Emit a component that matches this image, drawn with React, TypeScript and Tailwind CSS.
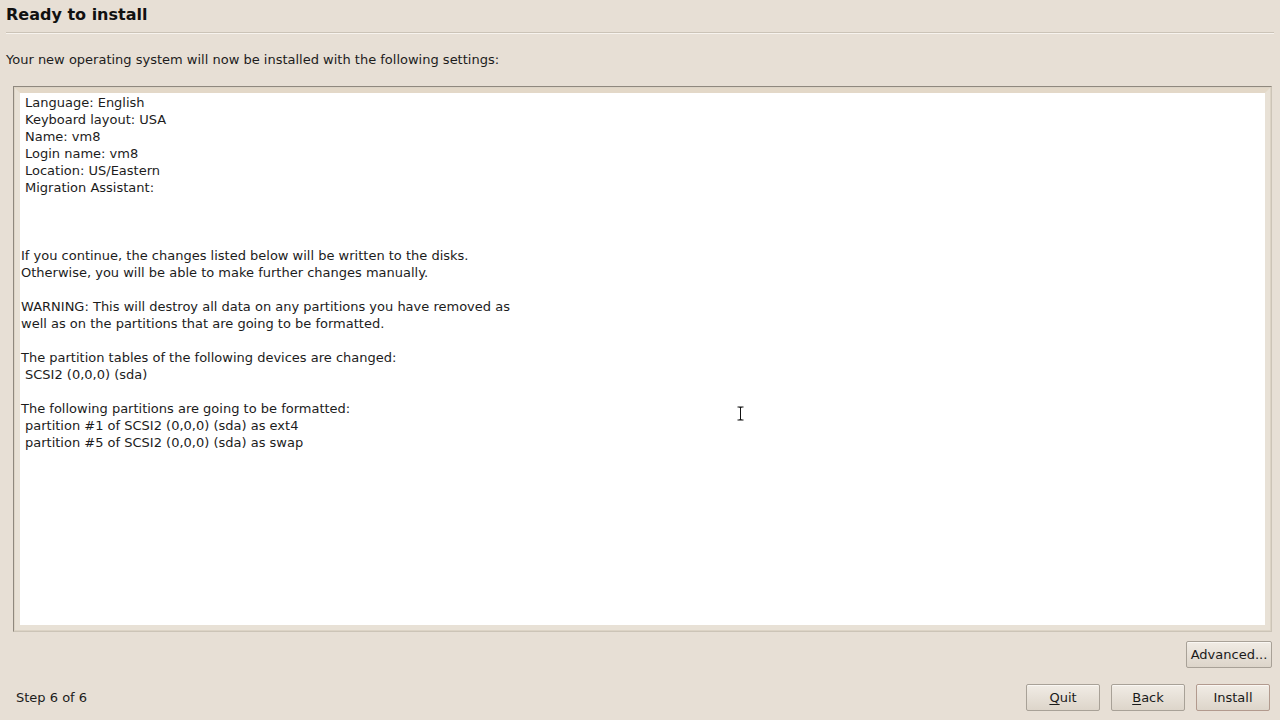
import * as React from 'react'

const summaryLines = [
  'Language: English',
  'Keyboard layout: USA',
  'Name: vm8',
  'Login name: vm8',
  'Location: US/Eastern',
  'Migration Assistant:',
]

const detailLines: (string | { text: string; indent: boolean })[] = [
  'If you continue, the changes listed below will be written to the disks.',
  'Otherwise, you will be able to make further changes manually.',
  '',
  'WARNING: This will destroy all data on any partitions you have removed as',
  'well as on the partitions that are going to be formatted.',
  '',
  'The partition tables of the following devices are changed:',
  { text: 'SCSI2 (0,0,0) (sda)', indent: true },
  '',
  'The following partitions are going to be formatted:',
  { text: 'partition #1 of SCSI2 (0,0,0) (sda) as ext4', indent: true },
  { text: 'partition #5 of SCSI2 (0,0,0) (sda) as swap', indent: true },
]

function GtkButton({ children, className = '' }: { children: React.ReactNode; className?: string }) {
  return (
    <button
      className={`flex h-[27px] items-center justify-center rounded-[2px] border border-[#a8a197] bg-gradient-to-b from-[#f1ece5] to-[#ddd5ca] text-[13px] text-[#1a1a1a] shadow-[inset_0_1px_0_#faf7f3] ${className}`}
    >
      {children}
    </button>
  )
}

// I-beam text cursor
function IBeam() {
  return (
    <svg width="9" height="17" viewBox="0 0 9 17">
      <path d="M1 1h7v2H5.5v11H8v2H1v-2h2.5V3H1z" fill="#111" stroke="#fff" strokeWidth="1" />
    </svg>
  )
}

export default function App() {
  return (
    <div
      className="flex h-[720px] w-[1280px] flex-col bg-[#e7dfd5] text-[#1c1c1c]"
      style={{ fontFamily: '"DejaVu Sans", Verdana, sans-serif' }}
    >
      {/* Header */}
      <div className="px-[6px] pt-[5px]">
        <h1 className="text-[16px] font-bold leading-[20px] text-[#111]">Ready to install</h1>
        <div className="mt-[7px] h-[2px] border-t border-[#cbc3b7] border-b-[#f7f3ee] border-b" />
      </div>

      <p className="mt-[17px] px-[6px] text-[13px] leading-[17px]">
        Your new operating system will now be installed with the following settings:
      </p>

      {/* Summary box */}
      <div className="relative ml-[13px] mr-[8px] mt-[18px] h-[546px] border border-[#8f887e] border-r-[#ccc4b7] border-b-[#ccc4b7] bg-[#dcd3c5] p-[1px]">
        <div className="h-full border-[5px] border-[#e8e1d6] border-t-[#e3d8c8]">
          <div className="h-full bg-white pt-[1px] text-[13px] leading-[17px]">
            <div className="pl-[5px]">
              {summaryLines.map((l) => (
                <div key={l}>{l}</div>
              ))}
            </div>
            <div className="h-[51px]" />
            <div className="pl-[1px]">
              {detailLines.map((l, i) =>
                typeof l === 'string' ? (
                  <div key={i} className="h-[17px]">
                    {l}
                  </div>
                ) : (
                  <div key={i} className="h-[17px] pl-[4px]">
                    {l.text}
                  </div>
                ),
              )}
            </div>
          </div>
        </div>
        <div className="absolute left-[722px] top-[318px]">
          <IBeam />
        </div>
      </div>

      <div className="mt-[9px] flex justify-end pr-[8px]">
        <GtkButton className="w-[86px]">Advanced...</GtkButton>
      </div>

      {/* Footer */}
      <div className="mt-[16px] flex items-center pl-[16px] pr-[10px]">
        <span className="text-[13px]">Step 6 of 6</span>
        <div className="flex-1" />
        <div className="flex gap-[11px]">
          <GtkButton className="w-[74px]">
            <span className="underline decoration-1 underline-offset-2">Q</span>uit
          </GtkButton>
          <GtkButton className="w-[74px]">
            <span className="underline decoration-1 underline-offset-2">B</span>ack
          </GtkButton>
          <GtkButton className="w-[74px] border-[#b29a8e]">Install</GtkButton>
        </div>
      </div>
    </div>
  )
}
